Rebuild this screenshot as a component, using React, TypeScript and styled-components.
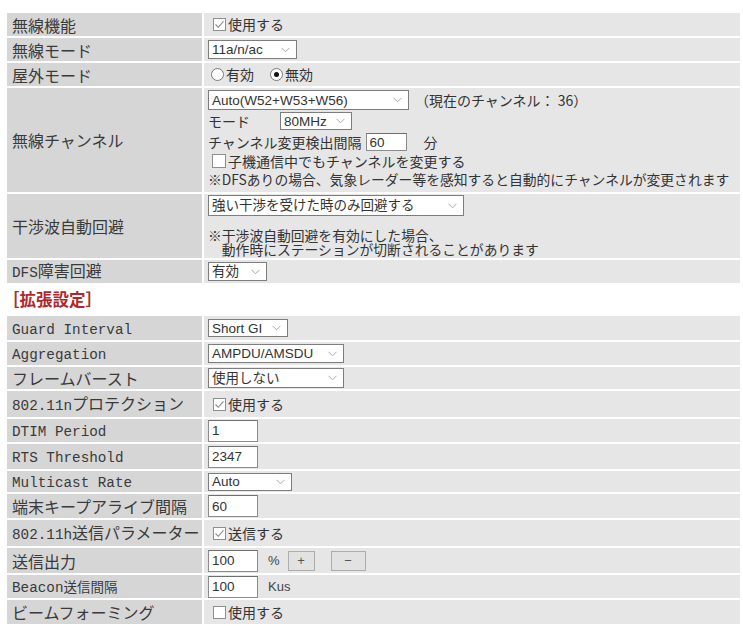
import React from "react";
import styled, { createGlobalStyle } from "styled-components";

const GlobalStyle = createGlobalStyle`
  * { box-sizing: border-box; }
  html, body { margin: 0; padding: 0; background: #fff; }
  body {
    font-family: "Noto Sans CJK JP", "Noto Sans", sans-serif;
    color: #333;
  }
`;

const Page = styled.div`
  width: 743px;
  height: 626px;
  overflow: hidden;
  padding: 13px 3px 0 7px;
`;

const Table = styled.div`
  display: grid;
  grid-template-columns: 195px 1fr;
  gap: 2px;
`;

const Label = styled.div<{ $h: number; $size?: number }>`
  height: ${(p) => p.$h}px;
  background: #d6d6d6;
  display: flex;
  align-items: center;
  padding-left: 5px;
  font-size: ${(p) => p.$size ?? 16}px;
  line-height: 1;
  color: #3a3a3a;
  white-space: nowrap;
`;

// keeps mixed latin / kana on one baseline inside the flex label
const LabelText = styled.span`
  display: inline-block;
`;

const Value = styled.div<{ $h: number; $stack?: boolean; $pt?: number }>`
  height: ${(p) => p.$h}px;
  background: #e6e6e6;
  display: flex;
  flex-direction: ${(p) => (p.$stack ? "column" : "row")};
  align-items: ${(p) => (p.$stack ? "flex-start" : "center")};
  padding: ${(p) => p.$pt ?? 0}px 0 0 4px;
  font-size: 14px;
  line-height: 15px;
  color: #333;
  white-space: nowrap;
`;

// half-width latin in the labels
const Half = styled.span`
  font-family: "Liberation Mono", monospace;
  font-size: 14.3px;
`;

const Small = styled.span`
  font-size: 13.5px;
`;

const Heading = styled.div`
  height: 33px;
  line-height: 33px;
  color: #b0282c;
  font-weight: 700;
  font-size: 16.5px;
  margin-left: -4px;
`;

const Line = styled.div<{ $mt?: number; $h?: number }>`
  display: flex;
  align-items: center;
  height: ${(p) => (p.$h ? `${p.$h}px` : "auto")};
  margin-top: ${(p) => p.$mt ?? 0}px;
  white-space: nowrap;
`;

const Note = styled.div<{ $mt?: number }>`
  margin-top: ${(p) => p.$mt ?? 0}px;
  line-height: 14px;
  font-size: 13.8px;
  white-space: pre;
`;

const Caption = styled.span<{ $ml?: number; $w?: number }>`
  display: inline-block;
  margin-left: ${(p) => p.$ml ?? 0}px;
  width: ${(p) => (p.$w ? `${p.$w}px` : "auto")};
`;

const Unit = styled.span<{ $ml?: number }>`
  margin-left: ${(p) => p.$ml ?? 10}px;
  font-family: "Liberation Sans", "Noto Sans CJK JP", sans-serif;
  font-size: 13px;
  color: #444;
`;

const SelectBox = styled.span<{ $w: number; $h?: number }>`
  display: inline-flex;
  align-items: center;
  justify-content: space-between;
  width: ${(p) => p.$w}px;
  height: ${(p) => p.$h ?? 19}px;
  background: #fff;
  border: 1px solid #7d7d7d;
  padding: 0 6px 0 3px;
  font-family: "Liberation Sans", "Noto Sans CJK JP", sans-serif;
  font-size: 13.5px;
  color: #333;
  white-space: nowrap;
  flex-shrink: 0;
`;

const Field = styled.input<{ $w: number; $h?: number }>`
  width: ${(p) => p.$w}px;
  height: ${(p) => p.$h ?? 22}px;
  margin: 0;
  padding: 0 3px;
  border: 1px solid #8c8c8c;
  border-top-color: #6f6f6f;
  background: #fff;
  font-family: "Liberation Sans", sans-serif;
  font-size: 13.5px;
  color: #333;
  outline: none;
`;

const Box = styled.span<{ $ml?: number; $size?: number }>`
  display: inline-flex;
  align-items: center;
  justify-content: center;
  width: ${(p) => p.$size ?? 13}px;
  height: ${(p) => p.$size ?? 13}px;
  margin-left: ${(p) => p.$ml ?? 5}px;
  margin-right: 2px;
  border: 1px solid #8e8e8e;
  background: #fff;
  flex-shrink: 0;
`;

const RadioDot = styled.span<{ $on?: boolean; $ml?: number }>`
  display: inline-flex;
  align-items: center;
  justify-content: center;
  width: 13px;
  height: 13px;
  margin-left: ${(p) => p.$ml ?? 3}px;
  margin-right: 2px;
  border-radius: 50%;
  border: 1px solid #7a7a7a;
  background: #fff;
  &::after {
    content: "";
    width: 5px;
    height: 5px;
    border-radius: 50%;
    background: ${(p) => (p.$on ? "#111" : "transparent")};
  }
`;

const Btn = styled.button<{ $w: number; $ml?: number }>`
  width: ${(p) => p.$w}px;
  height: 20px;
  margin: 0 0 0 ${(p) => p.$ml ?? 0}px;
  padding: 0;
  border: 1px solid #adadad;
  background: #e2e2e2;
  font-family: "Liberation Sans", sans-serif;
  font-size: 13px;
  color: #555;
  display: inline-flex;
  align-items: center;
  justify-content: center;
`;

const Chevron = () => (
  <svg width="9" height="6" viewBox="0 0 9 6">
    <path d="M0.5 0.8 L4.5 4.8 L8.5 0.8" fill="none" stroke="#a8a8a8" strokeWidth="1" />
  </svg>
);

const Select: React.FC<{ w: number; h?: number; children: React.ReactNode }> = ({ w, h, children }) => (
  <SelectBox $w={w} $h={h}>
    <span>{children}</span>
    <Chevron />
  </SelectBox>
);

const Checkbox: React.FC<{ checked?: boolean; ml?: number; size?: number }> = ({ checked, ml, size }) => (
  <Box $ml={ml} $size={size}>
    {checked && (
      <svg width="11" height="11" viewBox="0 0 11 11">
        <path d="M1.5 5.5 L4.3 8.3 L9.5 2.3" fill="none" stroke="#8a8a8a" strokeWidth="1.1" />
      </svg>
    )}
  </Box>
);

interface RowProps {
  label: React.ReactNode;
  h: number;
  size?: number;
  stack?: boolean;
  pt?: number;
  children?: React.ReactNode;
}

const Row: React.FC<RowProps> = ({ label, h, size, stack, pt, children }) => (
  <>
    <Label $h={h} $size={size}>
      <LabelText>{label}</LabelText>
    </Label>
    <Value $h={h} $stack={stack} $pt={pt}>{children}</Value>
  </>
);

const App: React.FC = () => {
  return (
    <Page>
      <GlobalStyle />
      <Table>
        <Row label="無線機能" h={23}>
          <Checkbox checked />
          <span>使用する</span>
        </Row>
        <Row label="無線モード" h={23}>
          <Select w={89} h={19}>11a/n/ac</Select>
        </Row>
        <Row label="屋外モード" h={23}>
          <RadioDot />
          <span>有効</span>
          <RadioDot $on $ml={16} />
          <span>無効</span>
        </Row>
        <Row label="無線チャンネル" h={104} stack pt={2}>
          <Line $h={20}>
            <Select w={201} h={20}>Auto(W52+W53+W56)</Select>
            <Caption $ml={6}>（現在のチャンネル： 36）</Caption>
          </Line>
          <Line $h={18} $mt={2}>
            <Caption $w={72}>モード</Caption>
            <Select w={72} h={18}>80MHz</Select>
          </Line>
          <Line $h={18} $mt={3}>
            <Caption>チャンネル変更検出間隔</Caption>
            <Caption $ml={4}>
              <Field $w={41} $h={18} readOnly defaultValue="60" />
            </Caption>
            <Caption $ml={17}>分</Caption>
          </Line>
          <Line $h={16} $mt={2}>
            <Checkbox ml={4} size={14} />
            <span>子機通信中でもチャンネルを変更する</span>
          </Line>
          <Note $mt={3}>※DFSありの場合、気象レーダー等を感知すると自動的にチャンネルが変更されます</Note>
        </Row>
        <Row label="干渉波自動回避" h={64} stack pt={1}>
          <Select w={256} h={21}>強い干渉を受けた時のみ回避する</Select>
          <Note $mt={12}>
            {"※干渉波自動回避を有効にした場合、\n\u3000動作時にステーションが切断されることがあります"}
          </Note>
        </Row>
        <Row label={<><Half>DFS</Half>障害回避</>} h={23}>
          <Select w={59} h={19}>有効</Select>
        </Row>
      </Table>

      <Heading>［拡張設定］</Heading>

      <Table>
        <Row label={<Half>Guard Interval</Half>} h={24}>
          <Select w={80} h={18}>Short GI</Select>
        </Row>
        <Row label={<Half>Aggregation</Half>} h={23}>
          <Select w={136} h={19}>AMPDU/AMSDU</Select>
        </Row>
        <Row label="フレームバースト" h={22}>
          <Select w={136} h={20}>使用しない</Select>
        </Row>
        <Row label={<><Half>802.11n</Half>プロテクション</>} h={26}>
          <Checkbox checked />
          <span>使用する</span>
        </Row>
        <Row label={<Half>DTIM Period</Half>} h={23}>
          <Field $w={50} readOnly defaultValue="1" />
        </Row>
        <Row label={<Half>RTS Threshold</Half>} h={25}>
          <Field $w={50} readOnly defaultValue="2347" />
        </Row>
        <Row label={<Half>Multicast Rate</Half>} h={21}>
          <Select w={84} h={18}>Auto</Select>
        </Row>
        <Row label="端末キープアライブ間隔" h={24}>
          <Field $w={50} readOnly defaultValue="60" />
        </Row>
        <Row label={<><Half>802.11h</Half>送信パラメーター</>} h={26}>
          <Checkbox checked />
          <span>送信する</span>
        </Row>
        <Row label="送信出力" h={25}>
          <Field $w={50} readOnly defaultValue="100" />
          <Unit>%</Unit>
          <Btn $w={27} $ml={8}>+</Btn>
          <Btn $w={35} $ml={16}>−</Btn>
        </Row>
        <Row label={<><Half>Beacon</Half><Small>送信間隔</Small></>} h={23}>
          <Field $w={50} readOnly defaultValue="100" />
          <Unit>Kus</Unit>
        </Row>
        <Row label="ビームフォーミング" h={24}>
          <Checkbox />
          <span>使用する</span>
        </Row>
      </Table>
    </Page>
  );
};

export default App;
